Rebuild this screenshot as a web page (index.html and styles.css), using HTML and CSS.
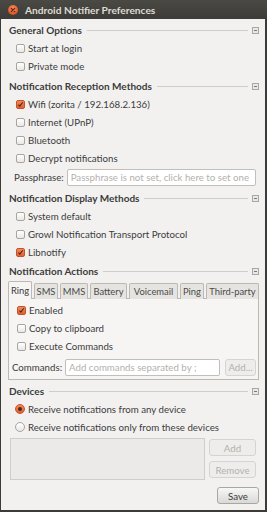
FILE: index.html
```html
<!DOCTYPE html>
<html>
<head>
<meta charset="utf-8">
<link rel="stylesheet" href="styles.css">
</head>
<body>
<div class="window">
  <div class="titlebar">
    <span class="close"><svg width="10" height="10" viewBox="0 0 10 10"><path d="M3.3 3.3 L6.7 6.7 M6.7 3.3 L3.3 6.7" stroke="#5a2410" stroke-width="1.2" stroke-linecap="round"/></svg></span>
    <span class="title">Android Notifier Preferences</span>
  </div>
  <div class="content">
    <section class="group">
      <div class="group-head"><span class="group-title">General Options</span><span class="rule"></span><span class="collapse"></span></div>
      <div class="row"><span class="check"></span>Start at login</div>
      <div class="row"><span class="check"></span>Private mode</div>
    </section>
    <section class="group">
      <div class="group-head"><span class="group-title">Notification Reception Methods</span><span class="rule"></span><span class="collapse"></span></div>
      <div class="row"><span class="check on"><svg width="9" height="9" viewBox="0 0 9 9"><path d="M1.8 4.6 L3.7 6.6 L7.4 1.6" fill="none" stroke="#4a2a1c" stroke-width="1.4"/></svg></span>Wifi (zorita / 192.168.2.136)</div>
      <div class="row"><span class="check"></span>Internet (UPnP)</div>
      <div class="row"><span class="check"></span>Bluetooth</div>
      <div class="row"><span class="check"></span>Decrypt notifications</div>
      <div class="field-row pass-row"><span class="field-label">Passphrase:</span><span class="entry">Passphrase is not set, click here to set one</span></div>
    </section>
    <section class="group">
      <div class="group-head"><span class="group-title">Notification Display Methods</span><span class="rule"></span><span class="collapse"></span></div>
      <div class="row"><span class="check"></span>System default</div>
      <div class="row"><span class="check"></span>Growl Notification Transport Protocol</div>
      <div class="row"><span class="check on"><svg width="9" height="9" viewBox="0 0 9 9"><path d="M1.8 4.6 L3.7 6.6 L7.4 1.6" fill="none" stroke="#4a2a1c" stroke-width="1.4"/></svg></span>Libnotify</div>
    </section>
    <section class="group actions">
      <div class="group-head"><span class="group-title">Notification Actions</span><span class="rule"></span><span class="collapse"></span></div>
      <div class="tabs">
        <span class="tab active t-ring">Ring</span>
        <span class="tab t-sms">SMS</span>
        <span class="tab t-mms">MMS</span>
        <span class="tab t-battery">Battery</span>
        <span class="tab t-voicemail">Voicemail</span>
        <span class="tab t-ping">Ping</span>
        <span class="tab t-third">Third-party</span>
      </div>
      <div class="panel">
        <div class="row"><span class="check on"><svg width="9" height="9" viewBox="0 0 9 9"><path d="M1.8 4.6 L3.7 6.6 L7.4 1.6" fill="none" stroke="#4a2a1c" stroke-width="1.4"/></svg></span>Enabled</div>
        <div class="row"><span class="check"></span>Copy to clipboard</div>
        <div class="row"><span class="check"></span>Execute Commands</div>
        <div class="field-row cmd-row"><span class="field-label">Commands:</span><span class="entry">Add commands separated by ;</span><span class="btn disabled add-dots">Add...</span></div>
      </div>
    </section>
    <section class="group devices">
      <div class="group-head"><span class="group-title">Devices</span><span class="rule"></span><span class="collapse"></span></div>
      <div class="row"><span class="radio on"></span>Receive notifications from any device</div>
      <div class="row"><span class="radio"></span>Receive notifications only from these devices</div>
      <div class="device-list">
        <div class="listbox"></div>
        <div class="list-buttons">
          <span class="btn disabled">Add</span>
          <span class="btn disabled">Remove</span>
        </div>
      </div>
    </section>
    <div class="footer"><span class="btn save">Save</span></div>
  </div>
</div>
</body>
</html>
```

FILE: styles.css
```css
* { box-sizing: border-box; }
body {
  margin: 0;
  font-family: Lato, "Noto Sans", sans-serif;
  font-size: 9.7px;
  color: #3c3c3c;
}
.window {
  width: 267px;
  height: 512px;
  background: #3c3b37;
  display: flex;
  flex-direction: column;
}
.titlebar {
  height: 19px;
  display: flex;
  align-items: center;
  background: linear-gradient(#4a4944, #3c3b37);
}
.close {
  width: 10px;
  height: 10px;
  margin-left: 8px;
  border-radius: 50%;
  background: radial-gradient(circle at 50% 35%, #f8915f, #dd5523 70%, #b8431a);
  display: flex;
}
.title {
  margin-left: 7px;
  color: #dfdbd2;
  font-weight: bold;
  font-size: 10.2px;
}
.content {
  flex: 1;
  background: #f2f1f0;
  margin: 0 2px 2px 1px;
  padding: 2px 6px 0 8px;
  display: flex;
  flex-direction: column;
}
.group { display: flex; flex-direction: column; }
.group + .group { margin-top: 2px; }
.group.actions { margin-top: 1px; }
.group-head {
  height: 18px;
  display: flex;
  align-items: center;
}
.group-title { font-weight: bold; font-size: 10px; }
.rule {
  flex: 1;
  height: 1px;
  background: #cfcdc9;
  margin: 0 4px 0 5px;
}
.collapse {
  width: 7px;
  height: 7px;
  border: 1px solid #a9a7a3;
  background: #e9e8e6;
  display: flex;
  align-items: center;
  justify-content: center;
}
.collapse::after {
  content: "";
  width: 3px;
  height: 1px;
  background: #777;
}
.row {
  height: 18px;
  display: flex;
  align-items: center;
  padding-left: 7px;
  white-space: nowrap;
}
.check {
  width: 9px;
  height: 9px;
  border: 1px solid #a8a5a1;
  border-radius: 2px;
  background: linear-gradient(#ffffff, #e9e8e6);
  margin-right: 3px;
  display: flex;
  align-items: center;
  justify-content: center;
  flex: none;
}
.check.on {
  background: linear-gradient(#f4875a, #e0622f);
  border-color: #c3542a;
}
.check svg { display: block; }
.radio {
  width: 10px;
  height: 10px;
  border: 1px solid #a8a5a1;
  border-radius: 50%;
  background: linear-gradient(#ffffff, #e9e8e6);
  margin-right: 3px;
  flex: none;
  margin-left: -1px;
  display: flex;
  align-items: center;
  justify-content: center;
}
.radio.on {
  background: linear-gradient(#f4875a, #e0622f);
  border-color: #c3542a;
}
.radio.on::after {
  content: "";
  width: 4px;
  height: 4px;
  border-radius: 50%;
  background: #4a2a1c;
}
.field-row {
  display: flex;
  align-items: center;
  white-space: nowrap;
}
.pass-row {
  height: 20px;
  padding-left: 5px;
  padding-right: 3px;
}
.field-label { margin-right: 3px; }
.entry {
  flex: 1;
  height: 17px;
  border: 1px solid #c2bfbb;
  border-radius: 2px;
  background: #ffffff;
  color: #b3b1ad;
  display: flex;
  align-items: center;
  padding-left: 3px;
  overflow: hidden;
  white-space: nowrap;
}
.tabs {
  display: flex;
  align-items: flex-end;
  gap: 2px;
  margin: 1px 0 0 -1px;
  height: 18px;
  position: relative;
  z-index: 1;
}
.tab {
  height: 16px;
  border: 1px solid #bcb9b4;
  border-bottom: none;
  border-radius: 2px 2px 0 0;
  background: #e6e4e1;
  display: flex;
  align-items: center;
  justify-content: center;
  color: #4a4a4a;
  white-space: nowrap;
  flex: none;
  font-size: 9.4px;
}
.t-ring { width: 24px; }
.t-sms { width: 24px; }
.t-mms { width: 28px; }
.t-battery { width: 37px; }
.t-voicemail { width: 49px; }
.t-ping { width: 24px; }
.t-third { width: 53px; }
.tab.active {
  height: 18px;
  background: #f6f5f4;
  color: #3c3c3c;
}
.panel {
  margin: -1px 0 0 -1px;
  border: 1px solid #bcb9b4;
  background: #f6f5f4;
  padding: 2px 2px 3px 1px;
  display: flex;
  flex-direction: column;
}
.cmd-row {
  height: 18px;
  margin-top: 3px;
  padding-left: 2px;
}
.btn {
  height: 17px;
  border: 1px solid #c9c7c3;
  border-radius: 3px;
  background: linear-gradient(#f6f6f5, #e4e3e0);
  display: flex;
  align-items: center;
  justify-content: center;
  color: #3c3c3c;
}
.btn.disabled {
  color: #b3b1ad;
  background: #eeedeb;
  border-color: #d6d4d0;
}
.add-dots {
  width: 31px;
  margin-left: 5px;
}
.devices { margin-top: 2px; }
.device-list {
  display: flex;
  gap: 4px;
  margin: 2px 3px 0 1px;
}
.listbox {
  flex: 1;
  height: 42px;
  border: 1px solid #d0cecb;
  background: #ebeae8;
}
.list-buttons {
  width: 47px;
  display: flex;
  flex-direction: column;
  gap: 5px;
  padding-top: 1px;
}
.footer {
  display: flex;
  justify-content: flex-end;
  margin-top: 7px;
}
.save {
  width: 42px;
  border-color: #a9a7a3;
  background: linear-gradient(#f7f7f6, #dad9d6);
}
```
